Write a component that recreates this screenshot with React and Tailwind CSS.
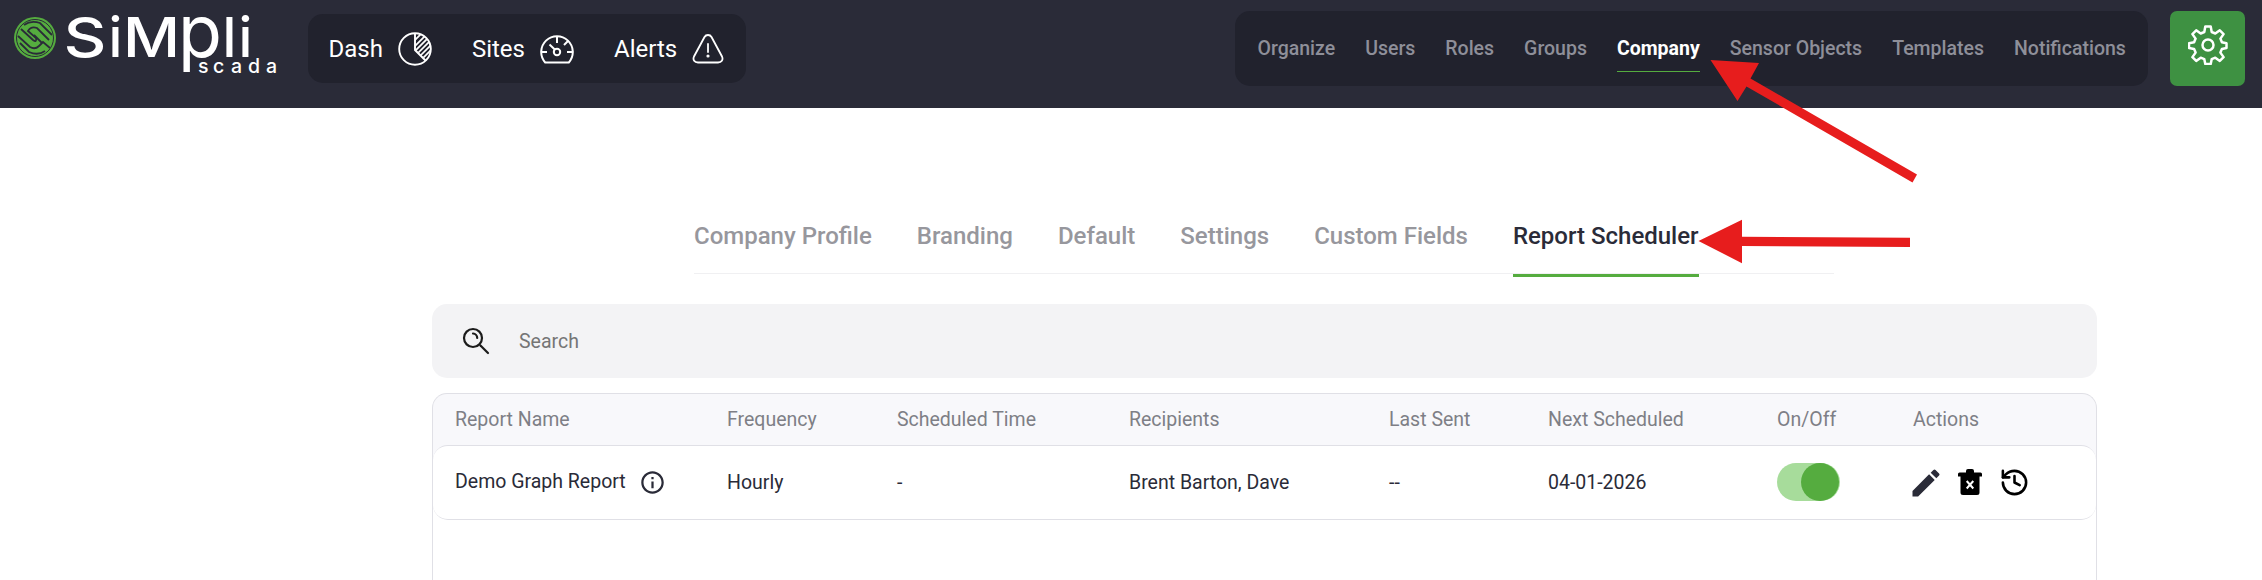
import { History } from 'lucide-react';
import { MdEdit, MdInfoOutline } from 'react-icons/md';

const MAIN_NAV = [
  { label: 'Dash', icon: PieIcon },
  { label: 'Sites', icon: GaugeIcon },
  { label: 'Alerts', icon: AlertIcon },
];

const ADMIN_NAV = ['Organize', 'Users', 'Roles', 'Groups', 'Company', 'Sensor Objects', 'Templates', 'Notifications'];

const TABS = ['Company Profile', 'Branding', 'Default', 'Settings', 'Custom Fields', 'Report Scheduler'];

const COLUMNS = ['Report Name', 'Frequency', 'Scheduled Time', 'Recipients', 'Last Sent', 'Next Scheduled', 'On/Off', 'Actions'];

const REPORTS = [
  { name: 'Demo Graph Report', frequency: 'Hourly', time: '-', recipients: 'Brent Barton, Dave', lastSent: '--', next: '04-01-2026' },
];

const GRID = 'grid grid-cols-[272px_170px_232px_260px_159px_229px_136px_1fr] pl-[22px]';

function Logo() {
  return (
    <svg width="266" height="64" viewBox="0 0 266 64" className="mt-[14px] ml-[14px] shrink-0 overflow-visible">
      <circle cx="21" cy="24" r="21" fill="#55ac3f" />
      <circle cx="21" cy="24" r="18.5" fill="none" stroke="#2a2b38" strokeWidth="1" />
      <g fill="none" stroke="#2a2b38" strokeWidth="1.8">
        <path d="M7 15 L19 26 Q23 29 22 24 L14 17 Q17 12 23 14 L35 26" />
        <path d="M4 22 L16 33 Q21 36 25 32 L29 28 L36 34" />
        <path d="M10 11 Q17 6 26 9 L38 21" />
        <path d="M20 21 L28 29" />
        <path d="M6 29 L15 38 Q24 42 31 37" />
      </g>
      <g fill="#fff" className="font-['Inter',sans-serif]" fontSize="55" fontWeight="500">
        <text x="49.500" y="43" textLength="43" lengthAdjust="spacingAndGlyphs">S</text>
        <text x="94.500" y="43">i</text>
        <text x="109" y="43" textLength="57" lengthAdjust="spacingAndGlyphs">M</text>
        <text x="164" y="43" fontSize="73" fontWeight="400" textLength="44" lengthAdjust="spacingAndGlyphs">p</text>
        <text x="208.500" y="43">l</text>
        <text x="224.500" y="43">i</text>
      </g>
      <text x="184 199 217 234 252" y="59" fill="#fff" className="font-['Inter',sans-serif]" fontSize="19.5" fontWeight="500">scada</text>
    </svg>
  );
}

function PieIcon() {
  return (
    <svg width="34" height="34" viewBox="0 0 34 34" fill="none" stroke="#fff" strokeWidth="1.9">
      <clipPath id="slice">
        <path d="M17 1A16 16 0 0 1 28.300 28.300L17 18Z" />
      </clipPath>
      <circle cx="17" cy="17" r="15.800" />
      <path d="M17 1v17l10.500 10.500" />
      <path d="M15 10L25 0M15 16L31 0M15 21L34 2M18 23L36 5M20 26L38 8M22 29L40 11" clipPath="url(#slice)" strokeWidth="1.700" />
    </svg>
  );
}

function GaugeIcon() {
  return (
    <svg width="34" height="34" viewBox="0 0 34 34" fill="none" stroke="#fff" strokeWidth="2">
      <path d="M5.200 30.500A15.800 15.800 0 1 1 28.800 30.500Z" strokeLinejoin="round" />
      <circle cx="17" cy="20" r="3.200" />
      <path d="M14.800 17.500L9.500 12.500M17 5v6M2 20h5M27 20h5M24 13l4-4" />
    </svg>
  );
}

function AlertIcon() {
  return (
    <svg width="32" height="32" viewBox="0 0 32 32" fill="none" stroke="#fff" strokeWidth="1.800" strokeLinecap="round">
      <path d="M12.500 4C14 1.300 18 1.300 19.500 4L30 23.500C31.500 27 29.500 29.500 26 29.500H6C2.500 29.500 0.500 27 2 23.500Z" />
      <path d="M16 11v8" />
      <circle cx="16" cy="23" r="0.700" fill="#fff" />
    </svg>
  );
}

function GearIcon() {
  return (
    <svg width="40" height="40" viewBox="0 0 40 40" fill="none" stroke="#fff" strokeWidth="2.500" strokeLinejoin="round">
      <path d="M17.300 1.500h5.400l1 5.500 3.600 1.500 4.500-3.200 3.800 3.800-3.200 4.500 1.500 3.600 4.600 1v4.800l-4.600 1-1.500 3.600 3.200 4.500-3.800 3.800-4.500-3.200-3.600 1.500-1 4.800h-5.400l-1-4.800-3.600-1.500-4.500 3.200-3.800-3.800 3.200-4.500-1.500-3.600-5.100-1v-4.800l5.100-1 1.500-3.600-3.200-4.500 3.800-3.800 4.500 3.200 3.600-1.500z" />
      <circle cx="20" cy="20" r="5.500" />
    </svg>
  );
}

function SearchIcon() {
  return (
    <svg width="28" height="28" viewBox="0 0 28 28" fill="none" stroke="#1b1b1b" strokeWidth="2.200" strokeLinecap="round" className="-mt-px">
      <circle cx="11" cy="11" r="9" />
      <path d="M11 6.500a4.500 4.500 0 0 1 4.200 4.500" />
      <path d="M18.500 18.500l7.500 7.500" />
    </svg>
  );
}

function TrashIcon() {
  return (
    <svg width="24" height="27" viewBox="0 0 24 27">
      <path fill="#000" d="M8 3.500V2Q8 0 10 0h4q2 0 2 2v1.500h6.500Q24 3.500 24 5v2.500H0V5q0-1.500 1.500-1.500zM2.500 7h19v16.500q0 2.500-2.500 2.500H5q-2.500 0-2.500-2.500z" />
      <path d="M8.700 12l6.600 7.500M15.300 12l-6.600 7.500" stroke="#fff" strokeWidth="2" />
    </svg>
  );
}

function Header() {
  return (
    <header className="flex h-[108px] items-start bg-[#2a2b38]">
      <Logo />
      <nav className="mt-[14px] ml-[28px] flex h-[69px] w-[438px] items-center gap-10 rounded-[15px] bg-[#21222d] pl-[20.5px] text-2xl text-white">
        {MAIN_NAV.map(({ label, icon: Icon }) => (
          <a key={label} className="flex items-center gap-[15px]">
            {label}
            <Icon />
          </a>
        ))}
      </nav>
      <nav className="mt-[11px] ml-auto flex h-[75px] w-[913px] items-center gap-[30px] rounded-[15px] bg-[#21222d] pl-[22.5px] text-[19.5px] font-medium text-[#8e8f99]">
        {ADMIN_NAV.map((label) => (
          <a
            key={label}
            className={label === 'Company'
              ? 'flex h-[47px] items-center border-b border-[#55ac3f] pt-px font-bold whitespace-nowrap text-white'
              : 'pt-px whitespace-nowrap'}
          >
            {label}
          </a>
        ))}
      </nav>
      <button className="mt-[11px] mr-[17px] ml-[22px] flex h-[75px] w-[75px] shrink-0 justify-center rounded-[7px] bg-[#3e9142] pt-[14px]">
        <GearIcon />
      </button>
    </header>
  );
}

function Tabs() {
  return (
    <div className="mt-[101px] ml-[694px] flex h-[65px] w-[1140px] gap-[45px] border-b border-[#f0f0f2] text-2xl font-medium text-[#97979d]">
      {TABS.map((tab) => (
        <div
          key={tab}
          className={tab === 'Report Scheduler'
            ? 'h-[68px] border-b-3 border-[#55ac3f] pt-[11px] whitespace-nowrap text-[#2a2b38]'
            : 'pt-[11px] whitespace-nowrap'}
        >
          {tab}
        </div>
      ))}
    </div>
  );
}

function ReportTable() {
  return (
    <div className="mt-[15px] ml-[432px] h-[200px] w-[1665px] rounded-t-[15px] border border-b-0 border-[#e0e0e6] bg-[linear-gradient(#f8f8fb_90px,#fff_90px)] text-[19.5px]">
      <div className={`${GRID} h-[51px] items-center pt-px text-[#7e7f86]`}>
        {COLUMNS.map((c) => <div key={c}>{c}</div>)}
      </div>
      {REPORTS.map((r) => (
        <div key={r.name} className={`${GRID} h-[75px] items-center rounded-[15px] border-y border-[#e0e0e6] bg-white text-[#2a2b38]`}>
          <div className="flex items-center gap-[13px] whitespace-nowrap">
            <span className="pb-[2px]">{r.name}</span>
            <MdInfoOutline size={27} className="mb-px" />
          </div>
          <div className="pt-px">{r.frequency}</div>
          <div className="pt-px">{r.time}</div>
          <div className="pt-px">{r.recipients}</div>
          <div className="pt-px">{r.lastSent}</div>
          <div className="pt-px">{r.next}</div>
          <div className="pb-px">
            <div className="flex h-[38px] w-[63px] justify-end rounded-full bg-[#a7dc9b] pr-px">
              <span className="h-[38px] w-[38px] rounded-full bg-[#55ac3f]" />
            </div>
          </div>
          <div className="flex items-center">
            <MdEdit size={36} className="-ml-[5px]" />
            <span className="ml-[14px]"><TrashIcon /></span>
            <History size={31} className="mb-px ml-[17px] text-black" />
          </div>
        </div>
      ))}
    </div>
  );
}

// Red callout arrows lying over the page
function Arrows() {
  return (
    <svg width="240" height="230" viewBox="1700 50 240 230" className="absolute top-[50px] left-[1700px] overflow-visible">
      <g fill="#e71d1d">
        <path d="M1710.500 60l48.500 3-8.500 15.500 166.500 96-4.500 8-166-96-9 14.500z" />
        <path d="M1698.500 241l43.500-21.200v17l168 1v9.200l-168-1v17.200z" />
      </g>
    </svg>
  );
}

export default function App() {
  return (
    <div className="relative h-[580px] w-[2262px] overflow-hidden bg-white font-['Roboto',sans-serif]">
      <Header />
      <Tabs />
      <div className="mt-[30px] ml-[432px] flex h-[74px] w-[1665px] items-center rounded-[15px] bg-[#f3f3f5] pl-[30px] text-[19.5px] text-[#757575]">
        <SearchIcon />
        <span className="ml-[29px] pt-px">Search</span>
      </div>
      <ReportTable />
      <Arrows />
    </div>
  );
}
